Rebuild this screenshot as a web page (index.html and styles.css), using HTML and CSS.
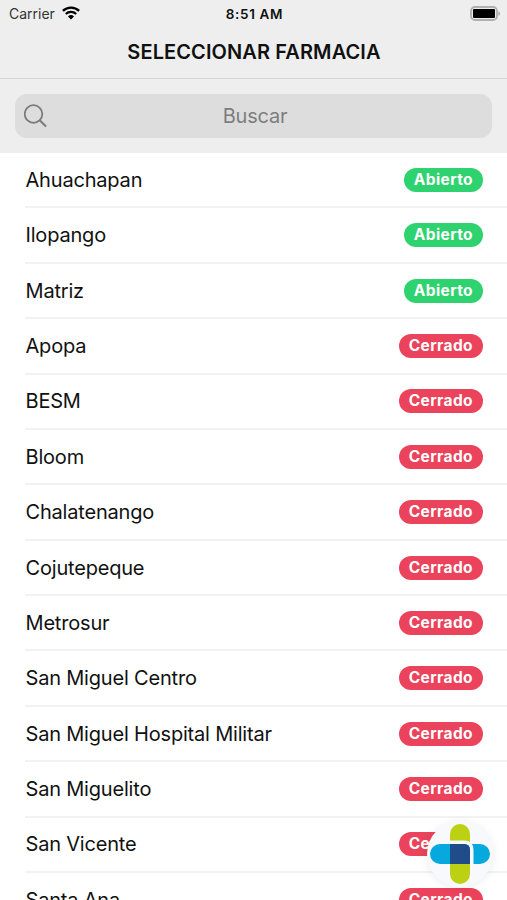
FILE: index.html
```html
<!DOCTYPE html>
<html lang="es">
<head>
    <meta charset="UTF-8">
    <meta name="viewport" content="width=device-width, initial-scale=1.0">
    <title>Seleccionar Farmacia</title>
    <link rel="stylesheet" href="styles.css">
</head>
<body>

    <div class="screen">

        <!-- Status Bar -->
        <div class="status-bar">
            <div class="carrier">
                <span>Carrier</span>
                <svg class="wifi" width="18" height="14" viewBox="0 0 18 14">
                    <path d="M0.9 4.9a11.6 11.6 0 0 1 16.2 0" fill="none" stroke="#000" stroke-width="2.4"/>
                    <path d="M3.8 8a7.5 7.5 0 0 1 10.4 0" fill="none" stroke="#000" stroke-width="2.2"/>
                    <path d="M9 13.6L6 10.5a4.3 4.3 0 0 1 6 0z"/>
                </svg>
            </div>
            <div class="time">8:51 AM</div>
            <svg class="battery" width="31" height="16" viewBox="0 0 31 16">
                <rect x="1" y="1" width="26" height="13" rx="4" fill="#ececec" stroke="#b0b0b0" stroke-width="1.8"/>
                <rect x="3" y="3" width="22" height="9" rx="1"/>
                <path d="M28.3 5.2c2.4 .8 2.4 3.8 0 4.6z" fill="#b0b0b0"/>
            </svg>
        </div>

        <!-- Title -->
        <h1 class="title">SELECCIONAR FARMACIA</h1>

        <!-- Search -->
        <div class="search">
            <div class="search-box">
                <svg class="search-icon" width="24" height="24" viewBox="0 0 24 24">
                    <circle cx="9.5" cy="10" r="8.8" fill="none" stroke="#7b7b7b" stroke-width="1.8"/>
                    <path d="M15.7 16.2l6.3 6.2" stroke="#7b7b7b" stroke-width="2.1"/>
                </svg>
                <span class="search-text">Buscar</span>
            </div>
        </div>

        <!-- Pharmacy List -->
        <ul class="list">
            <li class="row"><span class="name">Ahuachapan</span><span class="badge open">Abierto</span></li>
            <li class="row"><span class="name">Ilopango</span><span class="badge open">Abierto</span></li>
            <li class="row"><span class="name">Matriz</span><span class="badge open">Abierto</span></li>
            <li class="row"><span class="name">Apopa</span><span class="badge closed">Cerrado</span></li>
            <li class="row"><span class="name">BESM</span><span class="badge closed">Cerrado</span></li>
            <li class="row"><span class="name">Bloom</span><span class="badge closed">Cerrado</span></li>
            <li class="row"><span class="name">Chalatenango</span><span class="badge closed">Cerrado</span></li>
            <li class="row"><span class="name">Cojutepeque</span><span class="badge closed">Cerrado</span></li>
            <li class="row"><span class="name">Metrosur</span><span class="badge closed">Cerrado</span></li>
            <li class="row"><span class="name">San Miguel Centro</span><span class="badge closed">Cerrado</span></li>
            <li class="row"><span class="name">San Miguel Hospital Militar</span><span class="badge closed">Cerrado</span></li>
            <li class="row"><span class="name">San Miguelito</span><span class="badge closed">Cerrado</span></li>
            <li class="row"><span class="name">San Vicente</span><span class="badge closed">Cerrado</span></li>
            <li class="row"><span class="name">Santa Ana</span><span class="badge closed">Cerrado</span></li>
        </ul>

        <!-- Floating Button -->
        <div class="fab">
            <svg width="60" height="60" viewBox="0 0 60 60">
                <rect x="20" y="0" width="20" height="60" rx="10" fill="#bdd114"/>
                <rect x="0" y="20" width="60" height="20" rx="10" fill="#05a9dd"/>
                <path d="M20 16.5h14q9.5 0 9.5 9.5v14.5H40V26q0-6-6-6H20z" fill="#f7f9fd"/>
                <path d="M20 20h14q6 0 6 6v14H20z" fill="#204d89"/>
            </svg>
        </div>

    </div>

</body>
</html>
```
FILE: styles.css
```css
body {
    font-family: Inter, "Liberation Sans", sans-serif;
    margin: 0;
    background-color: #fff;
    color: #111;
}

.screen {
    position: relative;
    height: 900px;
    overflow: hidden;
}

/* Status Bar */
.status-bar {
    display: grid;
    grid-template-columns: 1fr auto 1fr;
    align-items: center;
    height: 27px;
    padding: 0 6px 0 9px;
    background-color: #eee;
    font-size: 14px;
}

.carrier {
    display: flex;
    align-items: center;
    gap: 7px;
    color: #333;
}

.wifi {
    margin-top: -2px;
}

.time {
    margin-right: 1px;
    font-size: 13.5px;
    font-weight: 600;
    letter-spacing: 0.65px;
}

.battery {
    justify-self: end;
}

.title {
    box-sizing: border-box;
    height: 52px;
    margin: 0;
    padding-left: 1px;
    border-bottom: 1px solid #d6d6d6;
    background-color: #eee;
    font-size: 20px;
    font-weight: 600;
    letter-spacing: 0.1px;
    line-height: 51px;
    text-align: center;
}

/* Search */
.search {
    box-sizing: border-box;
    height: 74px;
    padding: 15px 15px 0;
    background-color: #eee;
}

.search-box {
    display: flex;
    align-items: center;
    height: 44px;
    padding: 0 9px;
    border-radius: 12px;
    background-color: #ddd;
}

.search-text {
    flex: 1;
    margin-right: 21px;
    color: #7d7d7d;
    font-size: 20px;
    letter-spacing: -0.2px;
    text-align: center;
}

/* Pharmacy List */
.list {
    margin: 0;
    padding: 0 0 0 25px;
    list-style: none;
}

.row {
    box-sizing: border-box;
    display: flex;
    align-items: center;
    justify-content: space-between;
    height: 55.38px;
    padding: 0.5px 24.5px 0 0.5px;
    border-bottom: 2px solid #f2f2f2;
}

.name {
    font-size: 20px;
    letter-spacing: -0.19px;
}

.badge {
    height: 24px;
    padding: 0 9.5px 0 10px;
    border-radius: 12px;
    color: #fff;
    font-size: 15.5px;
    font-weight: 700;
    letter-spacing: 0.4px;
    line-height: 24px;
}

.open {
    background-color: #2ed370;
}

.closed {
    background-color: #ea435b;
}

/* Floating Button */
.fab {
    position: absolute;
    right: 14px;
    bottom: 13.5px;
    display: flex;
    align-items: center;
    justify-content: center;
    width: 66px;
    height: 66px;
    border-radius: 50%;
    background-color: #f7f9fd;
    box-shadow: 0 1px 10px rgba(0, 0, 0, 0.08);
}
```
